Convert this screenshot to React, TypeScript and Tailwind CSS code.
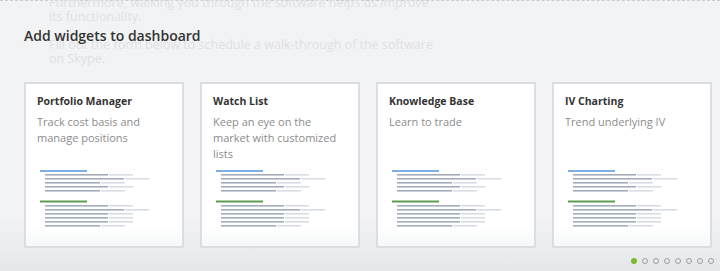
import React from "react";

const font = { fontFamily: '"Open Sans", "Noto Sans", sans-serif' };

type Row = [number, number];
const g1: Row[] = [
  [63, 24],
  [79, 24],
  [55, 24],
  [63, 24],
  [55, 24],
];
const g2: Row[] = [
  [63, 24],
  [79, 24],
  [63, 24],
  [63, 24],
  [63, 24],
  [55, 24],
  [63, 24],
];

function Chart() {
  return (
    <svg width="120" height="64" viewBox="0 0 120 64" className="block">
      <rect x="0" y="0" width="47" height="2" fill="#7eaee6" />
      {g1.map(([d, l], i) => (
        <g key={"a" + i}>
          <rect x="5" y={4 + i * 4} width={d} height="1.6" fill="#a3acbc" />
          <rect x={6 + d} y={4 + i * 4} width={l} height="1.6" fill="#d8dde5" />
        </g>
      ))}
      <rect x="0" y="30.5" width="47" height="2" fill="#5f9a50" />
      {g2.map(([d, l], i) => (
        <g key={"b" + i}>
          <rect x="5" y={35 + i * 4} width={d} height="1.6" fill="#a3acbc" />
          <rect x={6 + d} y={35 + i * 4} width={l} height="1.6" fill="#d8dde5" />
        </g>
      ))}
    </svg>
  );
}

const cards = [
  { title: "Portfolio Manager", desc: "Track cost basis and manage positions" },
  { title: "Watch List", desc: "Keep an eye on the market with customized lists" },
  { title: "Knowledge Base", desc: "Learn to trade" },
  { title: "IV Charting", desc: "Trend underlying IV" },
];

function Card({ title, desc }: { title: string; desc: string }) {
  return (
    <div className="relative shrink-0 w-[160px] h-[166px] border-2 border-[#dcdde0] bg-white flex flex-col">
      <div className="pl-[11px] pr-[18px] pt-[9px]">
        <div className="text-[10.5px] leading-[16px] font-bold text-[#333333]">{title}</div>
        <div className="mt-[5px] text-[11px] leading-[16px] text-[#8c8c8c]">{desc}</div>
      </div>
      <div className="absolute left-[14px] top-[86px]">
        <Chart />
      </div>
      <div className="absolute left-0 right-0 bottom-0 h-[18px] bg-gradient-to-b from-white to-[#f6f7f8]" />
    </div>
  );
}

export default function App() {
  return (
    <div
      className="relative w-[720px] h-[271px] overflow-hidden bg-gradient-to-b from-[#f2f3f5] from-80% to-[#e6e7ea]"
      style={font}
    >
      <div className="absolute left-0 right-0 top-0 border-t border-dashed border-[#c9cbcf]" />
      <div className="absolute left-[49px] top-[-4px] text-[12.5px] leading-[14px] text-[#dfe1e4] w-[390px]">
        <p>Furthermore, walking you through the software helps us improve its functionality.</p>
        <p className="mt-[14px]">Fill out the form below to schedule a walk-through of the software on Skype.</p>
      </div>
      <div className="relative pt-[26px] pl-6">
        <h2 className="text-[14px] leading-[20px] font-semibold text-[#333333]">Add widgets to dashboard</h2>
        <div className="mt-[36px] flex gap-4">
          {cards.map((c) => (
            <Card key={c.title} {...c} />
          ))}
        </div>
        <div className="mt-[10px] flex justify-end gap-[5px] pr-[6px]">
          <span className="w-[6px] h-[6px] rounded-full bg-[#7dbb2e]" />
          {Array.from({ length: 7 }).map((_, i) => (
            <span key={i} className="w-[6px] h-[6px] rounded-full border border-[#9c9ea2]" />
          ))}
        </div>
      </div>
    </div>
  );
}
